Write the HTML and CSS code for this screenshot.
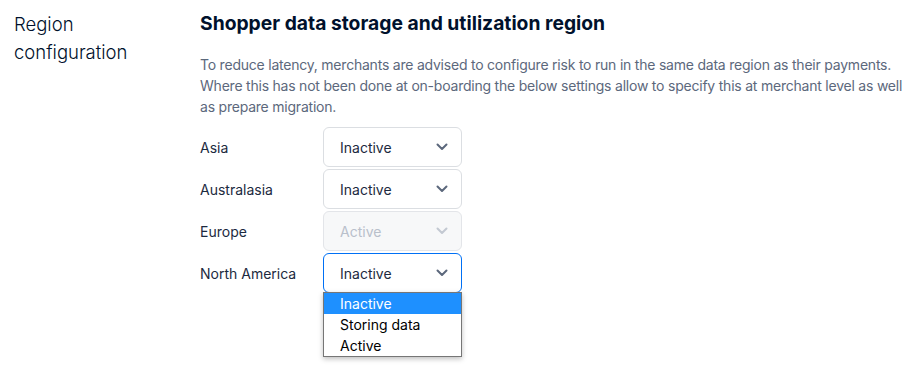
FILE: index.html
```html
<!DOCTYPE html>
<html lang="en">

<head>
    <meta charset="UTF-8">
    <title>Region configuration</title>
    <link rel="stylesheet" href="styles.css">
</head>

<body>
    <div class="settings">
        <div class="settings-title">Region configuration</div>
        <div class="settings-body">
            <h2>Shopper data storage and utilization region</h2>
            <p class="intro">To reduce latency, merchants are advised to configure risk to run in the same data region as their payments. Where this has not been done at on-boarding the below settings allow to specify this at merchant level as well as prepare migration.</p>
            <div class="region-list">
                <div class="region-row">
                    <span class="region-label">Asia</span>
                    <div class="select">
                        <span>Inactive</span>
                        <svg class="chevron" width="12" height="8" viewBox="0 0 12 8"><path d="M1.5 1.5 6 6l4.5-4.5" fill="none" stroke="currentColor" stroke-width="2" stroke-linecap="round" stroke-linejoin="round"/></svg>
                    </div>
                </div>
                <div class="region-row">
                    <span class="region-label">Australasia</span>
                    <div class="select">
                        <span>Inactive</span>
                        <svg class="chevron" width="12" height="8" viewBox="0 0 12 8"><path d="M1.5 1.5 6 6l4.5-4.5" fill="none" stroke="currentColor" stroke-width="2" stroke-linecap="round" stroke-linejoin="round"/></svg>
                    </div>
                </div>
                <div class="region-row">
                    <span class="region-label">Europe</span>
                    <div class="select disabled">
                        <span>Active</span>
                        <svg class="chevron" width="12" height="8" viewBox="0 0 12 8"><path d="M1.5 1.5 6 6l4.5-4.5" fill="none" stroke="currentColor" stroke-width="2" stroke-linecap="round" stroke-linejoin="round"/></svg>
                    </div>
                </div>
                <div class="region-row">
                    <span class="region-label">North America</span>
                    <div class="select-wrap">
                        <div class="select open">
                            <span>Inactive</span>
                            <svg class="chevron" width="12" height="8" viewBox="0 0 12 8"><path d="M1.5 1.5 6 6l4.5-4.5" fill="none" stroke="currentColor" stroke-width="2" stroke-linecap="round" stroke-linejoin="round"/></svg>
                        </div>
                        <div class="dropdown-menu">
                            <div class="dropdown-item selected">Inactive</div>
                            <div class="dropdown-item">Storing data</div>
                            <div class="dropdown-item">Active</div>
                        </div>
                    </div>
                </div>
            </div>
        </div>
    </div>
</body>

</html>
```

FILE: styles.css
```css
* {
    margin: 0;
    padding: 0;
    box-sizing: border-box;
}

html,
body {
    min-height: 100vh;
}

body {
    font-family: 'Inter', sans-serif;
    background-color: #fff;
    color: #00112c;
}

.settings {
    display: grid;
    grid-template-columns: 186px 1fr;
    padding: 10px 0 0 14px;
}

.settings-title {
    font-size: 18.5px;
    font-weight: 300;
    line-height: 28px;
    width: 130px;
}

.settings-body h2 {
    font-size: 19.3px;
    font-weight: 700;
    line-height: 26px;
    margin-bottom: 18px;
}

.intro {
    max-width: 706px;
    font-size: 14px;
    line-height: 21px;
    color: #5c687c;
    margin-bottom: 10px;
    letter-spacing: -0.22px;
}

.region-list {
    display: flex;
    flex-direction: column;
    gap: 2px;
}

.region-row {
    display: flex;
    align-items: center;
}

.region-label {
    width: 123px;
    font-size: 14px;
    color: #1c2a40;
}

.select-wrap {
    position: relative;
}

.select {
    display: flex;
    align-items: center;
    justify-content: space-between;
    width: 139px;
    height: 40px;
    padding: 0 13px 0 16px;
    border: 1px solid #dbdee2;
    border-radius: 6px;
    font-size: 14px;
    color: #1c2a40;
    background-color: #fff;
}

.chevron {
    color: #5c687c;
}

.select.disabled {
    background-color: #f7f8f9;
    border-color: #e3e5e9;
    color: #b9c0cb;
}

.select.disabled .chevron {
    color: #c3c9d2;
}

.select.open {
    border-color: #0070f5;
}

.dropdown-menu {
    position: absolute;
    top: 39px;
    left: 0;
    z-index: 10;
    width: 139px;
    background-color: #fff;
    border: 1px solid #767676;
    box-shadow: 0 2px 5px rgba(0, 0, 0, 0.25);
}

.dropdown-item {
    height: 21px;
    line-height: 21px;
    padding-left: 16px;
    font-size: 14px;
    color: #000;
}

.dropdown-item.selected {
    background-color: #1e90ff;
    color: #fff;
}
```
